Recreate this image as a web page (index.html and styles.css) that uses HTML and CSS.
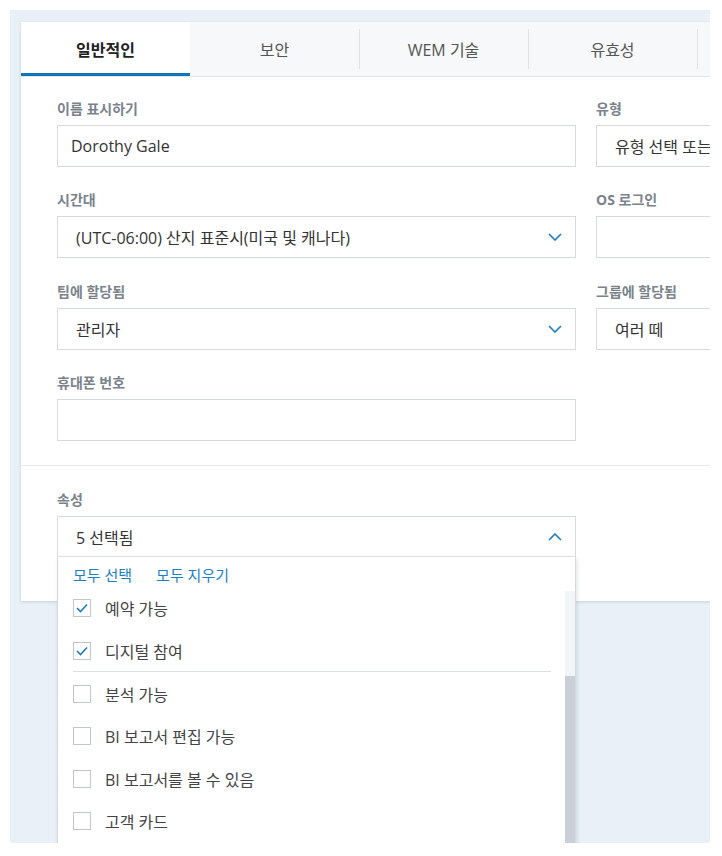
FILE: index.html
```html
<!DOCTYPE html>
<html lang="ko">
<head>
    <meta charset="UTF-8">
    <meta name="viewport" content="width=device-width, initial-scale=1.0">
    <title>사용자 편집</title>
    <link rel="stylesheet" href="styles.css">
</head>
<body>
    <div class="page">
        <div class="card">
            <!-- 탭 -->
            <div class="tabs">
                <div class="tab active">일반적인</div>
                <div class="tab">보안</div>
                <div class="tab">WEM 기술</div>
                <div class="tab">유효성</div>
                <div class="tab">&nbsp;</div>
            </div>

            <!-- 기본 정보 -->
            <div class="form">
                <div class="field">
                    <label class="field-label">이름 표시하기</label>
                    <div class="control">Dorothy Gale</div>
                </div>
                <div class="field">
                    <label class="field-label">유형</label>
                    <div class="control select">유형 선택 또는 입력</div>
                </div>
                <div class="field">
                    <label class="field-label">시간대</label>
                    <div class="control select">
                        (UTC-06:00) 산지 표준시(미국 및 캐나다)
                        <svg class="chev" width="14" height="8" viewBox="0 0 14 8"><polyline points="1,1 7,7 13,1" fill="none" stroke="#1a7dc4" stroke-width="1.6"/></svg>
                    </div>
                </div>
                <div class="field">
                    <label class="field-label"><b>OS</b> 로그인</label>
                    <div class="control"></div>
                </div>
                <div class="field">
                    <label class="field-label">팀에 할당됨</label>
                    <div class="control select">
                        관리자
                        <svg class="chev" width="14" height="8" viewBox="0 0 14 8"><polyline points="1,1 7,7 13,1" fill="none" stroke="#1a7dc4" stroke-width="1.6"/></svg>
                    </div>
                </div>
                <div class="field">
                    <label class="field-label">그룹에 할당됨</label>
                    <div class="control select">여러 떼</div>
                </div>
                <div class="field">
                    <label class="field-label">휴대폰 번호</label>
                    <div class="control"></div>
                </div>
            </div>

            <!-- 속성 -->
            <div class="section">
                <label class="field-label">속성</label>
                <div class="multi">
                    <div class="multi-head">
                        5 선택됨
                        <svg class="chev" width="14" height="8" viewBox="0 0 14 8"><polyline points="1,7 7,1 13,7" fill="none" stroke="#1a7dc4" stroke-width="1.6"/></svg>
                    </div>
                    <div class="dropdown">
                        <div class="links">
                            <span>모두 선택</span>
                            <span>모두 지우기</span>
                        </div>
                        <div class="list-wrap">
                            <div class="list">
                                <div class="opt"><span class="box"><svg width="16" height="16" viewBox="0 0 16 16"><polyline points="3,8 6.5,11.5 13,4.5" fill="none" stroke="#1a7dc4" stroke-width="1.6"/></svg></span>예약 가능</div>
                                <div class="opt last-checked"><span class="box"><svg width="16" height="16" viewBox="0 0 16 16"><polyline points="3,8 6.5,11.5 13,4.5" fill="none" stroke="#1a7dc4" stroke-width="1.6"/></svg></span>디지털 참여</div>
                                <div class="opt"><span class="box"></span>분석 가능</div>
                                <div class="opt"><span class="box"></span>BI 보고서 편집 가능</div>
                                <div class="opt"><span class="box"></span>BI 보고서를 볼 수 있음</div>
                                <div class="opt"><span class="box"></span>고객 카드</div>
                            </div>
                            <div class="scroll-track"><div class="scroll-thumb"></div></div>
                        </div>
                    </div>
                </div>
            </div>
        </div>
    </div>
</body>
</html>
```

FILE: styles.css
```css
body {
    margin: 0;
    background: #fff;
    font-family: "Open Sans", "Noto Sans CJK KR", sans-serif;
    color: #333;
    -webkit-font-smoothing: antialiased;
}
.page {
    margin: 10px 0 0 10px;
    width: 700px;
    height: 833px;
    padding: 12px 0 0 11px;
    box-sizing: border-box;
    background: #e9f0f7;
    overflow: hidden;
}
.card {
    width: 900px;
    height: 579px;
    background: #fff;
    box-shadow: 0 1px 3px rgba(40, 60, 80, .18);
}

/* tabs */
.tabs {
    display: flex;
    height: 54px;
    background: #f6f8fa;
    border-bottom: 1px solid #e1e6eb;
}
.tab {
    position: relative;
    flex: 0 0 169px;
    display: flex;
    align-items: center;
    justify-content: center;
    font-size: 16px;
    color: #555;
}
.tab:nth-child(n+3)::before {
    content: "";
    position: absolute;
    left: 0;
    top: 7px;
    bottom: 7px;
    width: 1px;
    background: #dde2e7;
}
.tab.active {
    background: #fff;
    font-weight: 700;
    color: #222;
    box-shadow: inset 0 -3px 0 #1273b6;
}

/* fields */
.form {
    display: grid;
    grid-template-columns: 519px 519px;
    column-gap: 20px;
    row-gap: 24.4px;
    padding: 23px 36px 24px;
    border-bottom: 1px solid #e6eaee;
}
.field-label {
    display: block;
    font-size: 14px;
    line-height: 17px;
    font-weight: 600;
    color: #7a838c;
    margin-bottom: 8px;
}
.field-label b { font-weight: 700; }
.control {
    position: relative;
    height: 42px;
    box-sizing: border-box;
    border: 1px solid #d5dade;
    padding: 0 13px;
    display: flex;
    align-items: center;
    font-size: 16px;
    color: #333;
    white-space: nowrap;
}
.control.select { padding-left: 18px; }
.chev {
    position: absolute;
    right: 13px;
    top: 50%;
    margin-top: -4px;
}

/* attributes */
.section {
    padding: 25px 36px 0;
}
.multi {
    position: relative;
    width: 519px;
}
.multi-head {
    position: relative;
    height: 41px;
    box-sizing: border-box;
    border: 1px solid #d5dade;
    border-bottom-color: #e1e4e7;
    padding: 0 18px;
    display: flex;
    align-items: center;
    font-size: 16px;
    color: #333;
}
.dropdown {
    position: absolute;
    top: 100%;
    left: 0;
    right: 0;
    height: 320px;
    background: #fff;
    border: 1px solid #d5dade;
    border-top: none;
    box-shadow: 1px 2px 4px rgba(40, 60, 80, .15);
}
.links {
    height: 34px;
    display: flex;
    align-items: center;
    gap: 24px;
    padding-left: 15px;
    font-size: 15px;
    color: #1a80c8;
}
.list-wrap {
    position: relative;
    height: 280px;
    overflow: hidden;
}
.list {
    margin-top: -4px;
}
.opt {
    height: 42.6px;
    box-sizing: border-box;
    margin: 0 24px 0 15px;
    display: flex;
    align-items: center;
    gap: 14px;
    font-size: 16px;
    color: #444;
}
.opt.last-checked { border-bottom: 1px solid #dcdfe2; }
.box {
    width: 18px;
    height: 18px;
    box-sizing: border-box;
    border: 1px solid #bfc6cd;
    background: #fff;
    display: flex;
    align-items: center;
    justify-content: center;
}
.scroll-track {
    position: absolute;
    top: 0;
    right: 0;
    bottom: 0;
    width: 10px;
    background: #f2f5f8;
}
.scroll-thumb {
    margin-top: 85px;
    height: 300px;
    background: #c9d0d8;
}
```
